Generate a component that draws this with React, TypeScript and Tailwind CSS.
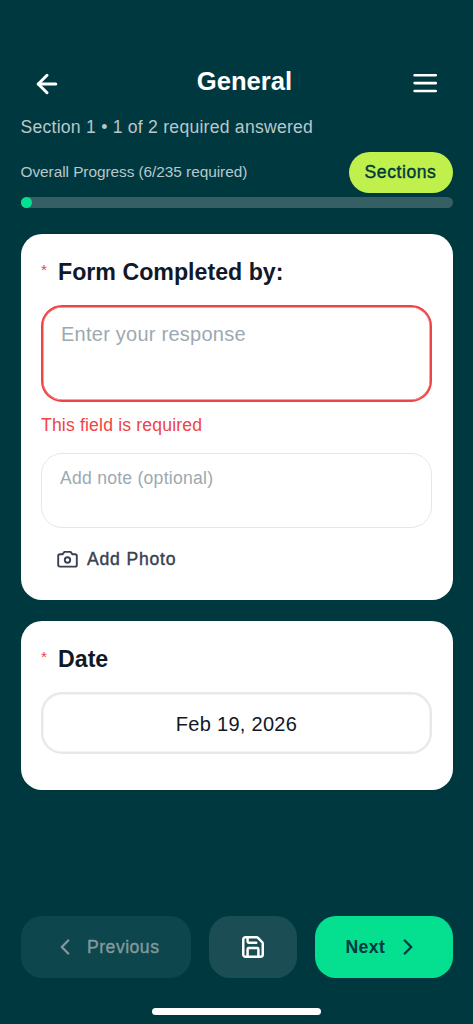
import React from 'react';
import { ArrowLeft, ChevronLeft, ChevronRight, Save } from 'lucide-react';

interface QuestionCardProps {
  title: string;
  className: string;
  children: React.ReactNode;
}

const QuestionCard: React.FC<QuestionCardProps> = ({ title, className, children }) => (
  <section className={`bg-white rounded-[21px] px-[20.5px] ${className}`}>
    <div className="flex h-7 items-center">
      <span className="w-[17px] pb-[5px] text-[15.4px] leading-none text-[#ef4444]">*</span>
      <h2 className="text-[23.2px] leading-7 font-bold text-[#111827]">{title}</h2>
    </div>
    {children}
  </section>
);

const CameraIcon: React.FC = () => (
  <svg className="h-[18px] w-[21px]" viewBox="0 0 21 18" fill="none" stroke="currentColor" strokeWidth={1.9} strokeLinejoin="round">
    <path d="M7.4 1.9h6.2l1.9 2.4h2.6a1.7 1.7 0 0 1 1.7 1.7v8.9a1.7 1.7 0 0 1-1.7 1.7H2.9a1.7 1.7 0 0 1-1.7-1.7V6a1.7 1.7 0 0 1 1.7-1.7h2.6z" />
    <circle cx="10.5" cy="10" r="2.7" />
  </svg>
);

const App: React.FC = () => {
  return (
    <div className="flex h-[1024px] w-[473px] flex-col overflow-hidden bg-[#003840] font-['Liberation_Sans',Arial,sans-serif]">
      {/* Header */}
      <header className="px-[20.5px] pt-[65px]">
        <div className="flex h-[34px] items-center justify-between px-3">
          <button className="flex w-7 justify-center pt-[3px] text-white" aria-label="Back">
            <ArrowLeft size={30} strokeWidth={2.4} className="shrink-0" />
          </button>
          <h1 className="pb-[3px] pl-[18px] text-[25.6px] leading-8 font-bold text-white">General</h1>
          <button className="flex w-[30px] justify-center pt-[2px]" aria-label="Menu">
            <svg className="h-5 w-6" viewBox="0 0 24 20" fill="none" stroke="white" strokeWidth={2.6} strokeLinecap="round">
              <path d="M1.6 2.2h21.2M1.6 10.1h21.2M1.6 18h21.2" />
            </svg>
          </button>
        </div>
        <p className="mt-4 text-[17.6px] leading-6 tracking-[0.24px] text-[#b9c7ca]">Section 1 • 1 of 2 required answered</p>
        <div className="mt-3 flex h-[42px] items-center justify-between">
          <span className="text-[15.4px] tracking-[-0.05px] text-[#b9c7ca]">Overall Progress (6/235 required)</span>
          <button className="h-[41px] w-[104px] rounded-full bg-[#c0f04c] text-[17.6px] tracking-[0.55px] text-[#003840] [-webkit-text-stroke:0.4px]">
            Sections
          </button>
        </div>
        <div className="mt-1 h-[11px] rounded-full bg-[#365f65]">
          <div className="h-full w-[11px] rounded-full bg-[#05df90]" />
        </div>
      </header>

      {/* Questions */}
      <main className="flex-1 px-[20.5px] pt-[26px]">
        <QuestionCard title="Form Completed by:" className="h-[366px] pt-6">
          <div className="mt-[19px] h-[97px] rounded-[21px] border-2 border-[#ef4444] px-[18px] pt-[13px] text-[20px] leading-7 tracking-[0.25px] text-[#9ca9b0] shadow-[inset_0_0_0_0.5px_#ef4444]">
            Enter your response
          </div>
          <p className="mt-[11px] text-[17.6px] leading-6 tracking-[0.17px] text-[#ef4444]">This field is required</p>
          <div className="mt-4 h-[75px] rounded-[21px] border border-[#e5e7eb] px-[18px] pt-3 text-[17.6px] leading-6 tracking-[0.24px] text-[#9ca9b0]">
            Add note (optional)
          </div>
          <button className="mt-[19px] ml-4 flex h-6 items-center gap-[9px] text-[17.6px] tracking-[0.8px] text-[#374151] [-webkit-text-stroke:0.4px]">
            <CameraIcon />
            Add Photo
          </button>
        </QuestionCard>

        <QuestionCard title="Date" className="mt-[21px] h-[169px] pt-6">
          <div className="mt-[19px] flex h-[62px] items-center justify-center rounded-[21px] border-2 border-[#e7e8ec] pt-[2px] text-[20px] tracking-[0.3px] text-[#111827] shadow-[inset_0_0_0_0.5px_#e7e8ec]">
            Feb 19, 2026
          </div>
        </QuestionCard>
      </main>

      {/* Bottom navigation */}
      <footer className="h-[114px] px-[20.5px] pt-[6px]">
        <div className="flex h-[62px] gap-[18px] text-[17.6px]">
          <button className="flex w-[170px] items-center rounded-[21px] bg-[#0d464c] pl-[31.5px] tracking-[0.5px] text-[#80999d] [-webkit-text-stroke:0.4px]">
            <ChevronLeft size={26} strokeWidth={2.2} />
            <span className="ml-[9px]">Previous</span>
          </button>
          <button className="flex w-[88px] items-center justify-center rounded-[21px] bg-[#1a4e54] text-white" aria-label="Save">
            <Save size={26} strokeWidth={2.3} />
          </button>
          <button className="flex flex-1 items-center rounded-[21px] bg-[#05df90] pl-[31px] font-bold tracking-[0.4px] text-[#003840]">
            Next
            <ChevronRight size={26} strokeWidth={2.2} className="ml-[9.5px]" />
          </button>
        </div>
        <div className="mx-auto mt-[30px] h-[7px] w-[169px] rounded-full bg-white" />
      </footer>
    </div>
  );
};

export default App;
